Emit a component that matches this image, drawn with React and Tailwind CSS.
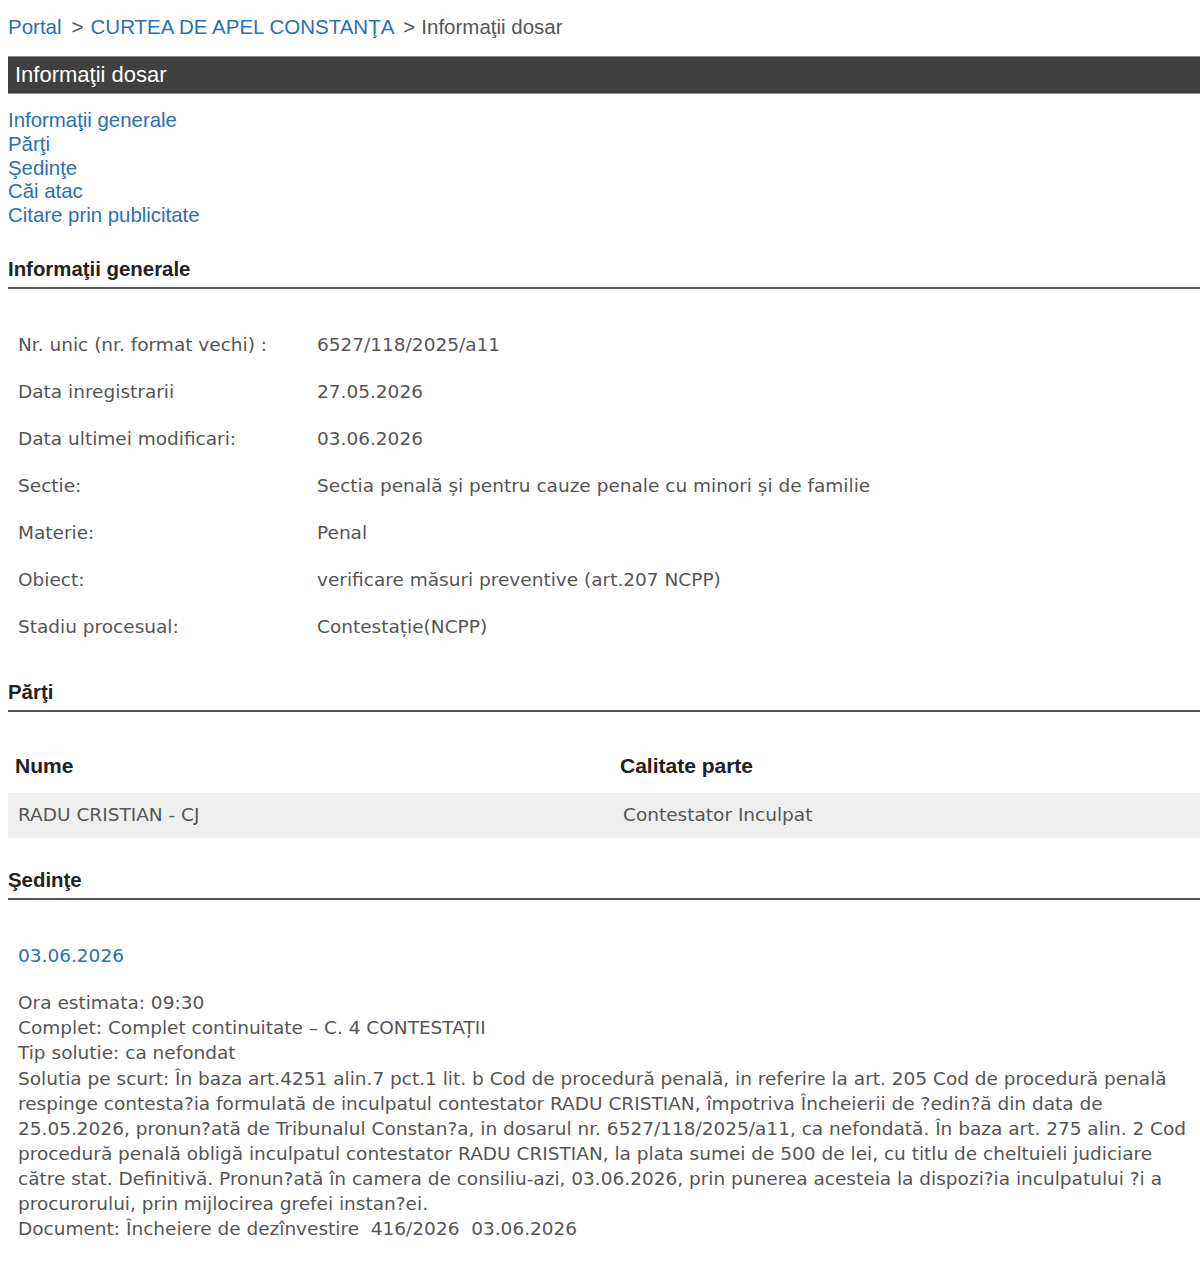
import React from 'react'

const links = ['Informaţii generale', 'Părţi', 'Şedinţe', 'Căi atac', 'Citare prin publicitate']

const details = [
  ['Nr. unic (nr. format vechi) :', '6527/118/2025/a11'],
  ['Data inregistrarii', '27.05.2026'],
  ['Data ultimei modificari:', '03.06.2026'],
  ['Sectie:', 'Sectia penală și pentru cauze penale cu minori și de familie'],
  ['Materie:', 'Penal'],
  ['Obiect:', 'verificare măsuri preventive (art.207 NCPP)'],
  ['Stadiu procesual:', 'Contestație(NCPP)'],
]

const solutie =
  'Solutia pe scurt: În baza art.4251 alin.7 pct.1 lit. b Cod de procedură penală, in referire la art. 205 Cod de procedură penală respinge contesta?ia formulată de inculpatul contestator RADU CRISTIAN, împotriva Încheierii de ?edin?ă din data de 25.05.2026, pronun?ată de Tribunalul Constan?a, in dosarul nr. 6527/118/2025/a11, ca nefondată. În baza art. 275 alin. 2 Cod procedură penală obligă inculpatul contestator RADU CRISTIAN, la plata sumei de 500 de lei, cu titlu de cheltuieli judiciare către stat. Definitivă. Pronun?ată în camera de consiliu-azi, 03.06.2026, prin punerea acesteia la dispozi?ia inculpatului ?i a procurorului, prin mijlocirea grefei instan?ei.'

function SectionTitle({ children, className = '' }) {
  return (
    <div className={'border-b-2 border-[#555] pb-[6px] ' + className}>
      <h2 className="text-[20.4px] leading-6 font-bold text-[#222]">{children}</h2>
    </div>
  )
}

export default function App() {
  return (
    <div className="bg-white min-h-[1262px] pl-2 font-['Liberation_Sans',Arial,sans-serif]">
      {/* breadcrumb */}
      <div className="pt-[15px] mb-[17px] text-[20.5px] leading-6 text-[#555]">
        <a className="text-[#2870b4]">Portal</a>
        <span className="ml-[10px] mr-[7px]">&gt;</span>
        <a className="text-[#2870b4]">CURTEA DE APEL CONSTANŢA</a>
        <span className="ml-[9px] mr-[6px]">&gt;</span>
        <span>Informaţii dosar</span>
      </div>

      <div className="h-[38px] flex items-center pl-[7px] pb-px bg-[#414040] border-y border-[#8a8a8a] text-white text-[22px]">
        Informaţii dosar
      </div>

      <nav className="mt-[15px] flex flex-col text-[20.4px] leading-[23.75px] text-[#2870b4]">
        {links.map((l) => (
          <a key={l}>{l}</a>
        ))}
      </nav>

      <SectionTitle className="mt-[29px]">Informaţii generale</SectionTitle>

      <div className="mt-[32.5px] px-[10px] font-['DejaVu_Sans',Verdana,sans-serif] text-[18.5px] text-[#555]">
        {details.map(([k, v]) => (
          <div key={k} className="grid grid-cols-[299px_1fr] h-[47px] items-center">
            <span>{k}</span>
            <span>{v}</span>
          </div>
        ))}
      </div>

      <SectionTitle className="mt-[29.5px]">Părţi</SectionTitle>

      <div className="mt-[42px]">
        <div className="grid grid-cols-[605px_1fr] pb-[15px] text-[21px] leading-6 font-bold text-[#222]">
          <span className="pl-[7px]">Nume</span>
          <span className="pl-[7px]">Calitate parte</span>
        </div>
        <div className="grid grid-cols-[605px_1fr] h-[45px] items-center bg-[#efefef] font-['DejaVu_Sans',Verdana,sans-serif] text-[18.5px] text-[#555]">
          <span className="pl-[10px]">RADU CRISTIAN - CJ</span>
          <span className="pl-[10px]">Contestator Inculpat</span>
        </div>
      </div>

      <SectionTitle className="mt-[30px]">Şedinţe</SectionTitle>

      <div className="mt-[44px] pl-[10px] font-['DejaVu_Sans',Verdana,sans-serif] text-[18.5px] text-[#555]">
        <div className="leading-6 text-[#2870b4]">03.06.2026</div>
        <div className="mt-[22.5px] leading-[25.1px]">
          <div>Ora estimata: 09:30</div>
          <div>Complet: Complet continuitate – C. 4 CONTESTAȚII</div>
          <div>Tip solutie: ca nefondat</div>
          <div>{solutie}</div>
          <div>{'Document: Încheiere de dezînvestire\u00a0 416/2026\u00a0 03.06.2026'}</div>
        </div>
      </div>
    </div>
  )
}
